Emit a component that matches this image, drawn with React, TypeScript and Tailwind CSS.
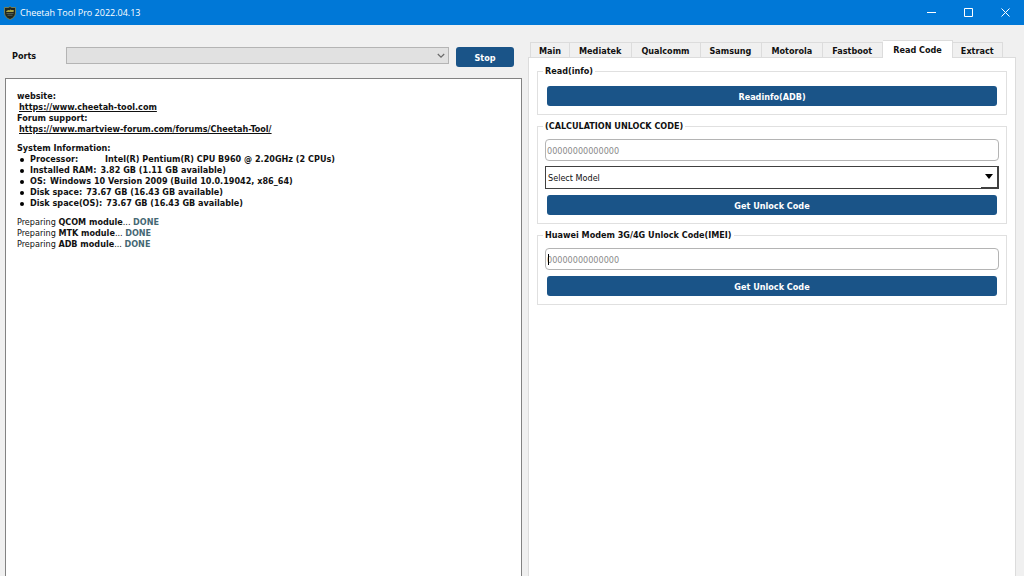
import React, { ReactNode } from "react";
import clsx from "clsx";

const tabs = ["Main", "Mediatek", "Qualcomm", "Samsung", "Motorola", "Fastboot", "Read Code", "Extract"];
const activeTab = "Read Code";

const systemInfo = [
  { label: "Processor:", value: "Intel(R) Pentium(R) CPU B960 @ 2.20GHz (2 CPUs)", wide: true },
  { label: "Installed RAM:", value: "3.82 GB (1.11 GB available)" },
  { label: "OS:", value: "Windows 10 Version 2009 (Build 10.0.19042, x86_64)" },
  { label: "Disk space:", value: "73.67 GB (16.43 GB available)" },
  { label: "Disk space(OS):", value: "73.67 GB (16.43 GB available)" },
];

const modules = ["QCOM", "MTK", "ADB"];

const ShieldLogo = () => (
  <svg width="12" height="14" viewBox="0 0 24 28" aria-hidden="true">
    <path d="M12 1 L15 3 L23 3 V14 C23 20 18 25 12 27 C6 25 1 20 1 14 V3 L9 3 Z" fill="#20261f" stroke="#8a8c52" strokeWidth="1.6" />
    <path d="M4 11 C7 7 10 10 13 7 C15 9 18 7 20 9 L19 12 H5 Z" fill="#a8a545" />
    <path d="M5 15 H19 M7 18.500 H17" stroke="#5f6f63" strokeWidth="1.6" />
  </svg>
);

const TitleBar = () => (
  <header className="flex h-[25px] shrink-0 items-center bg-[#0078d7] pl-1 text-white">
    <ShieldLogo />
    <h1 className="ml-1 flex-1 font-['Open_Sans','Noto_Sans',sans-serif] text-[9px] leading-3">
      Cheetah Tool Pro 2022.04.13
    </h1>
    <button aria-label="Minimize" className="flex h-full w-[37px] items-center justify-center">
      <svg width="9" height="9" viewBox="0 0 9 9" stroke="currentColor" fill="none">
        <path d="M0 4.500H9" />
      </svg>
    </button>
    <button aria-label="Maximize" className="flex h-full w-[37px] items-center justify-center">
      <svg width="9" height="9" viewBox="0 0 9 9" stroke="currentColor" fill="none">
        <path d="M.5.5h8v8h-8z" />
      </svg>
    </button>
    <button aria-label="Close" className="flex h-full w-[37px] items-center justify-center">
      <svg width="9" height="9" viewBox="0 0 9 9" stroke="currentColor" fill="none">
        <path d="M.5.5l8 8M8.500.5l-8 8" />
      </svg>
    </button>
  </header>
);

const ActionButton = ({ children, className }: { children: ReactNode; className?: string }) => (
  <button className={clsx("h-5 rounded-[3px] bg-[#1a5488] pt-px font-bold text-white", className)}>
    {children}
  </button>
);

const Group = ({ title, children, className }: { title: string; children: ReactNode; className?: string }) => (
  <fieldset className="min-w-0 border border-[#e0e0e0] px-[7px] pb-2">
    <legend className="-ml-0.5 h-3 px-0.5 font-bold">{title}</legend>
    <div className={clsx("flex flex-col", className)}>{children}</div>
  </fieldset>
);

const CodeInput = ({ label, caret }: { label: string; caret?: boolean }) => (
  <div className="relative flex">
    <input
      type="text"
      aria-label={label}
      placeholder="00000000000000"
      className="h-[22px] w-full rounded-[4px] border border-[#b4b4b4] bg-white px-px pt-px outline-none placeholder:text-[#8a8a8a]"
    />
    {caret && <span className="absolute left-[3px] top-1.5 h-[11px] w-px bg-black" />}
  </div>
);

const LogPanel = () => (
  <div className="flex flex-1 flex-col gap-2 border border-b-0 border-[#828282] bg-white px-[11px] pt-3 leading-[11px]">
    <div className="font-bold">
      <p>website:</p>
      <p className="pl-0.5"><a href="https://www.cheetah-tool.com" className="underline">https://www.cheetah-tool.com</a></p>
      <p>Forum support:</p>
      <p className="pl-0.5"><a href="https://www.martview-forum.com/forums/Cheetah-Tool/" className="underline">https://www.martview-forum.com/forums/Cheetah-Tool/</a></p>
    </div>
    <div className="font-bold">
      <p>System Information:</p>
      <ul>
        {systemInfo.map((item) => (
          <li key={item.label} className="flex items-center">
            <span className="ml-[3px] mr-1.5 h-1 w-1 rounded-full bg-black" />
            <span className={clsx(item.wide ? "w-[75px]" : "mr-1")}>{item.label}</span>
            <span>{item.value}</span>
          </li>
        ))}
      </ul>
    </div>
    <div>
      {modules.map((name) => (
        <p key={name}>
          Preparing <b>{name} module</b>... <span className="font-bold text-[#456874]">DONE</span>
        </p>
      ))}
    </div>
  </div>
);

const PortsSide = () => (
  <main className="flex min-w-0 flex-col pt-[22px]">
    <div className="mb-[11px] flex pl-[7px] pr-2">
      <label htmlFor="ports" className="w-[54px] pt-[3px] font-bold leading-3">Ports</label>
      <div className="relative mr-[7px] h-[17px] flex-1">
        <select id="ports" className="block h-full w-full appearance-none border border-[#b4b4b4] bg-[#e1e1e1]" />
        <svg className="pointer-events-none absolute right-1 top-1.5" width="8" height="6" viewBox="0 0 8 6" fill="none" stroke="#6a6a6a" strokeWidth="1.2">
          <path d="M.8 1l3.200 3.200L7.200 1" />
        </svg>
      </div>
      <ActionButton className="w-[58px]">Stop</ActionButton>
    </div>
    <LogPanel />
  </main>
);

const ToolSide = () => (
  <aside className="flex min-w-0 flex-col pt-[15px]">
    <div role="tablist" className="flex h-[17px] items-end pl-0.5">
      {tabs.map((tab) => (
        <button
          key={tab}
          role="tab"
          aria-selected={tab === activeTab}
          className={clsx(
            "whitespace-nowrap border-r border-t border-[#dcdcdc] font-bold first:border-l first:px-2 last:px-2",
            tab === activeTab ? "z-10 -mb-px h-[18px] bg-white px-2.5" : "h-[15px] bg-[#f0f0f0] pl-[9px] pr-2.5 pt-px"
          )}
        >
          {tab}
        </button>
      ))}
    </div>
    <div className="flex flex-1 flex-col gap-[5px] border border-b-0 border-[#dcdcdc] bg-white px-2 pt-[7px]">
      <Group title="Read(info)" className="pt-[9px]">
        <ActionButton className="mx-0.5">Readinfo(ADB)</ActionButton>
      </Group>
      <Group title="(CALCULATION UNLOCK CODE)" className="pt-[7px]">
        <CodeInput label="Calculation code" />
        <div className="relative mb-1.5 mt-[5px] flex">
          <select aria-label="Model" className="h-[23px] w-full appearance-none border border-[#404040] bg-white px-0.5 pt-px">
            <option>Select Model</option>
          </select>
          <span className="pointer-events-none absolute bottom-0 right-0 top-0 flex w-[18px] justify-center border-b-2 border-r-2 border-[#404040] pt-2">
            <svg width="8" height="5" viewBox="0 0 8 5">
              <path d="M0 0h8L4 5z" fill="#000" />
            </svg>
          </span>
        </div>
        <ActionButton className="mx-0.5">Get Unlock Code</ActionButton>
      </Group>
      <Group title="Huawei Modem 3G/4G Unlock Code(IMEI)" className="gap-1.5 pt-[7px]">
        <CodeInput label="Modem IMEI" caret />
        <ActionButton className="mx-0.5">Get Unlock Code</ActionButton>
      </Group>
    </div>
  </aside>
);

const App: React.FC = () => {
  return (
    <div className="flex min-h-screen flex-col bg-[#f0f0f0] font-['DejaVu_Sans_Condensed','DejaVu_Sans',sans-serif] text-[9px] leading-3 text-[#111]">
      <TitleBar />
      <div className="grid flex-1 grid-cols-[517fr_488fr] gap-1.5 pl-[5px] pr-2">
        <PortsSide />
        <ToolSide />
      </div>
    </div>
  );
};

export default App;
